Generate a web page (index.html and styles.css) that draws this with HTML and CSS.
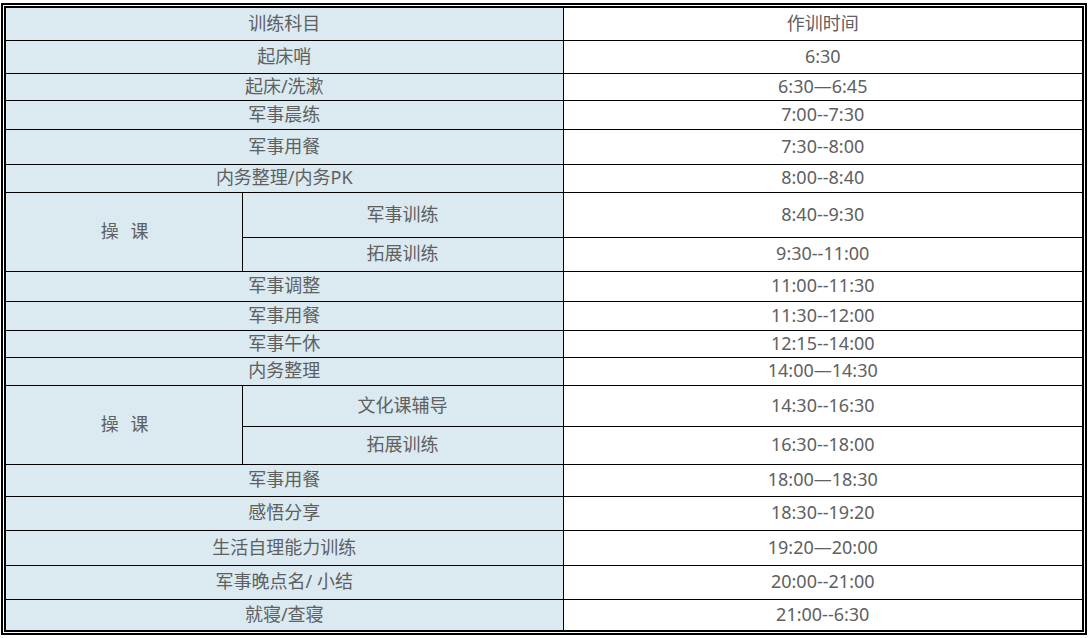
FILE: index.html
```html
<!DOCTYPE html>
<html lang="zh">
<head>
<meta charset="utf-8">
<title>作训时间表</title>
<link rel="stylesheet" href="styles.css">
</head>
<body>
<div class="frame">
<table class="schedule">
  <colgroup>
    <col class="c1"><col class="c2"><col class="c3">
  </colgroup>
  <tr class="h33"><td class="subj" colspan="2">训练科目</td><td class="time">作训时间</td></tr>
  <tr class="h33"><td class="subj" colspan="2">起床哨</td><td class="time">6:30</td></tr>
  <tr class="h27"><td class="subj" colspan="2">起床/洗漱</td><td class="time">6:30—6:45</td></tr>
  <tr class="h29"><td class="subj" colspan="2">军事晨练</td><td class="time">7:00--7:30</td></tr>
  <tr class="h35"><td class="subj" colspan="2">军事用餐</td><td class="time">7:30--8:00</td></tr>
  <tr class="h28"><td class="subj" colspan="2">内务整理/内务PK</td><td class="time">8:00--8:40</td></tr>
  <tr class="h45"><td class="subj group" rowspan="2">操&nbsp;课</td><td class="subj">军事训练</td><td class="time">8:40--9:30</td></tr>
  <tr class="h34"><td class="subj">拓展训练</td><td class="time">9:30--11:00</td></tr>
  <tr class="h30"><td class="subj" colspan="2">军事调整</td><td class="time">11:00--11:30</td></tr>
  <tr class="h29"><td class="subj" colspan="2">军事用餐</td><td class="time">11:30--12:00</td></tr>
  <tr class="h27"><td class="subj" colspan="2">军事午休</td><td class="time">12:15--14:00</td></tr>
  <tr class="h28"><td class="subj" colspan="2">内务整理</td><td class="time">14:00—14:30</td></tr>
  <tr class="h41"><td class="subj group" rowspan="2">操&nbsp;课</td><td class="subj">文化课辅导</td><td class="time">14:30--16:30</td></tr>
  <tr class="h38"><td class="subj">拓展训练</td><td class="time">16:30--18:00</td></tr>
  <tr class="h32"><td class="subj" colspan="2">军事用餐</td><td class="time">18:00—18:30</td></tr>
  <tr class="h34"><td class="subj" colspan="2">感悟分享</td><td class="time">18:30--19:20</td></tr>
  <tr class="h35"><td class="subj" colspan="2">生活自理能力训练</td><td class="time">19:20—20:00</td></tr>
  <tr class="h34"><td class="subj" colspan="2">军事晚点名/ 小结</td><td class="time">20:00--21:00</td></tr>
  <tr class="h32"><td class="subj" colspan="2">就寝/查寝</td><td class="time">21:00--6:30</td></tr>
</table>
</div>
</body>
</html>
```

FILE: styles.css
```css
html, body {
  margin: 0;
  padding: 0;
  background: #ffffff;
}

body {
  padding: 3px 0 0 1px;
  font-family: "Noto Sans", "Noto Sans CJK SC", sans-serif;
  font-size: 18px;
  color: #606060;
}

.frame {
  width: 1080px;
  border: 2px solid #000;
  padding: 1px;
  box-sizing: content-box;
}

.schedule {
  width: 1080px;
  border-collapse: collapse;
  border: 2px solid #000;
  table-layout: fixed;
}

.c1 { width: 237px; }
.c2 { width: 321px; }
.c3 { width: auto; }

.schedule td {
  border: 1px solid #000;
  padding: 0 0 2px 0;
  text-align: center;
  vertical-align: middle;
  line-height: 1;
  white-space: nowrap;
}

.subj {
  background: #daeaf0;
}

.time {
  background: #ffffff;
}

.group {
  letter-spacing: 0.2em;
  padding-left: 0.3em !important;
}

.h27 { height: 27px; }
.h28 { height: 28px; }
.h29 { height: 29px; }
.h30 { height: 30px; }
.h32 { height: 32px; }
.h33 { height: 33px; }
.h34 { height: 34px; }
.h35 { height: 35px; }
.h38 { height: 38px; }
.h41 { height: 41px; }
.h45 { height: 45px; }
```
